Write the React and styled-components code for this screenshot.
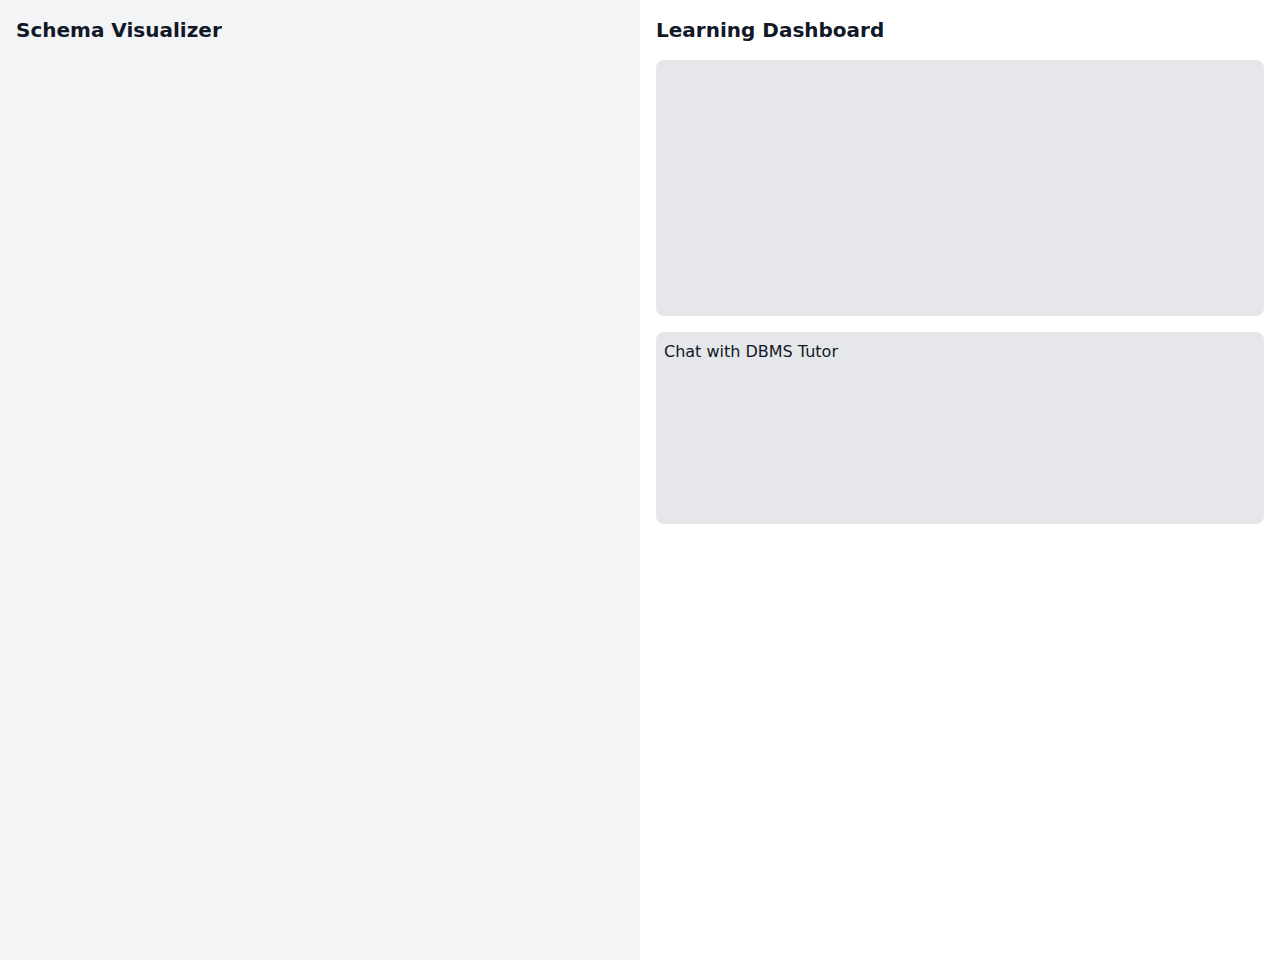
import React from 'react'
import styled, { createGlobalStyle } from 'styled-components'

const GlobalStyle = createGlobalStyle`
  * { box-sizing: border-box; }
  html, body { margin: 0; padding: 0; }
  body {
    font-family: "DejaVu Sans", sans-serif;
    color: #111827;
  }
`

const Layout = styled.div`
  display: flex;
  width: 100vw;
  height: 100vh;
`

const Pane = styled.section`
  flex: 1;
  padding: 16px;
  background-color: ${props => props.$muted ? '#f3f4f6' : '#ffffff'};
  display: flex;
  flex-direction: column;
  gap: 16px;
`

const Title = styled.h2`
  margin: 0;
  font-size: 20px;
  line-height: 28px;
  font-weight: 700;
  color: #111827;
`

const Card = styled.div`
  height: ${props => props.$height}px;
  background-color: #e5e7eb;
  border-radius: 8px;
  padding: 8px;
  font-size: 16px;
  line-height: 24px;
`

function App() {
  return (
    <>
      <GlobalStyle />
      <Layout>
        <Pane $muted>
          <Title>Schema Visualizer</Title>
        </Pane>
        <Pane>
          <Title>Learning Dashboard</Title>
          <Card $height={256} />
          <Card $height={192}>Chat with DBMS Tutor</Card>
        </Pane>
      </Layout>
    </>
  )
}

export default App
